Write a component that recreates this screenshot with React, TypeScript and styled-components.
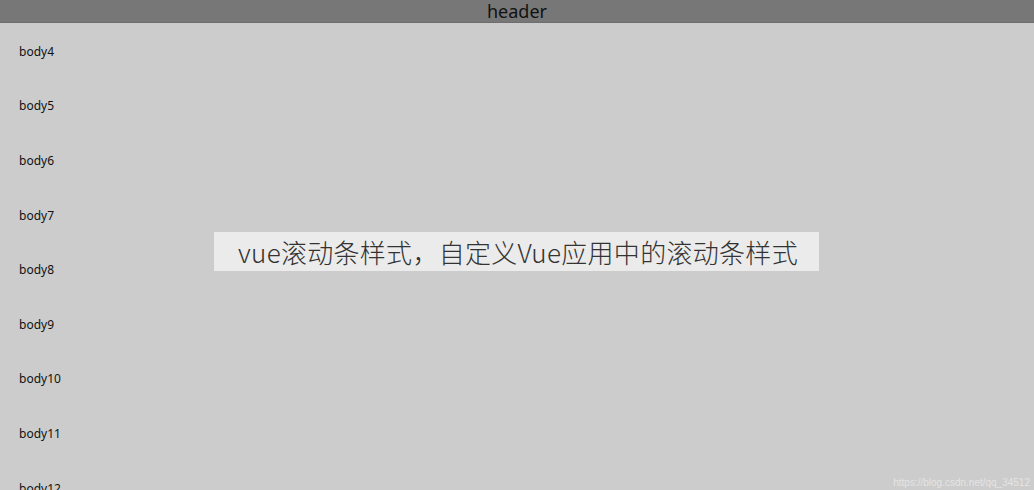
import React from "react";
import styled, { createGlobalStyle } from "styled-components";

const GlobalStyle = createGlobalStyle`
  html, body {
    margin: 0;
    padding: 0;
    height: 100%;
    overflow: hidden;
  }
  body {
    font-family: "Noto Sans", "Noto Sans CJK SC", sans-serif;
    background: #cccccc;
  }
`;

const rows = [4, 5, 6, 7, 8, 9, 10, 11, 12];

const App = () => {
  return (
    <Wrapper>
      <GlobalStyle />
      <Header>header</Header>
      <Body>
        {rows.map((n) => (
          <Row key={n}>body{n}</Row>
        ))}
      </Body>
      <Banner>vue滚动条样式，自定义Vue应用中的滚动条样式</Banner>
      <Watermark>https://blog.csdn.net/qq_34512</Watermark>
    </Wrapper>
  );
};
export default App;

const Wrapper = styled.div`
  position: relative;
  width: 1034px;
  height: 490px;
  overflow: hidden;
  background: #cccccc;
`;

const Header = styled.div`
  height: 23px;
  background: #777777;
  border-bottom: 1px solid #6e6e6e;
  box-sizing: border-box;
  text-align: center;
  font-size: 18px;
  line-height: 22px;
  color: #111;
`;

const Body = styled.div`
  display: flex;
  flex-direction: column;
  padding-left: 19px;
`;

const Row = styled.div`
  height: 54.6px;
  display: flex;
  align-items: center;
  font-size: 12px;
  color: #111;
  &:first-child {
    padding-top: 1px;
  }
`;

const Banner = styled.div`
  position: absolute;
  left: 214px;
  top: 232px;
  width: 605px;
  height: 39px;
  background: #ebebeb;
  box-sizing: border-box;
  padding-left: 24px;
  display: flex;
  align-items: center;
  font-family: "Noto Sans CJK SC", sans-serif;
  font-weight: 300;
  font-size: 26px;
  letter-spacing: 0.3px;
  color: #333;
  white-space: nowrap;
`;

const Watermark = styled.div`
  position: absolute;
  right: 4px;
  bottom: 2px;
  font-size: 10px;
  color: #e4e4e4;
  font-family: "Liberation Sans", sans-serif;
`;
